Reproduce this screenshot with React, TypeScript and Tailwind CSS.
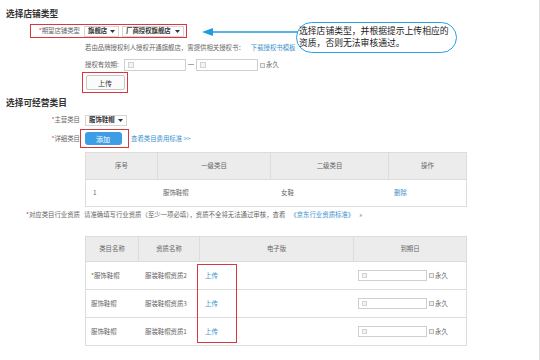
import React from 'react';

const Caret = () => (
  <svg width="5" height="3" viewBox="0 0 5 3" className="shrink-0">
    <polygon points="0,0 5,0 2.5,3" fill="#333" />
  </svg>
);

const Select = ({ label, width }: { label: string; width: string }) => (
  <div className={`${width} h-[11px] border border-[#d5d5d5] flex items-center justify-between px-[3px] font-bold text-[#333] bg-white`}>
    <span>{label}</span>
    <Caret />
  </div>
);

const DateInput = ({ width }: { width: string }) => (
  <div className={`${width} h-[12px] border border-[#cfcfcf] flex items-center pl-[3px] bg-white`}>
    <div className="w-[6px] h-[6px] border border-[#d4d4d4] bg-[#f3f3f3]" />
  </div>
);

const Checkbox = () => <div className="w-[5px] h-[5px] border border-[#bbb] bg-[#f0f0f0]" />;

const Forever = () => (
  <div className="flex items-center gap-[1px] ml-[2px]">
    <Checkbox />
    <span>永久</span>
  </div>
);

const Label = ({ text }: { text: string }) => (
  <div className="w-[74px] text-right shrink-0">
    <span className="text-[#e0333c]">*</span>
    {text}
  </div>
);

const App = () => {
  const quals = ['服装鞋帽资质2', '服装鞋帽资质3', '服装鞋帽资质1'];

  return (
    <div className="relative w-[540px] h-[360px] overflow-hidden bg-white border-r border-[#e2e2e2] text-[6.4px] leading-[8px] text-[#666] font-['Noto_Sans_CJK_SC',sans-serif]">
      <div className="pl-[6px] pt-[9px]">
        {/* 店铺类型 */}
        <h2 className="text-[8.7px] leading-[10px] font-bold text-[#333]">选择店铺类型</h2>
        <div className="mt-[5px] ml-[24px] w-[157px] h-[14px] border-[1.5px] border-[#d9363e] flex items-center">
          <div className="w-[49px] text-right">
            <span className="text-[#e0333c]">*</span>期望店铺类型
          </div>
          <div className="ml-[4px]">
            <Select label="旗舰店" width="w-[35px]" />
          </div>
          <div className="ml-[3px]">
            <Select label="厂商授权旗舰店" width="w-[62px]" />
          </div>
        </div>
        <div className="mt-[6px] ml-[79px] h-[8px] flex">
          <span>若由品牌授权利人授权开通旗舰店，需提供相关授权书：</span>
          <span className="ml-[6px] text-[#3a91cc]">下载授权书模板</span>
        </div>
        <div className="mt-[7px] ml-[79px] h-[12px] flex items-center">
          <span className="w-[39px]">授权有效期:</span>
          <DateInput width="w-[62px]" />
          <span className="w-[10px] text-center">一</span>
          <DateInput width="w-[62px]" />
          <Forever />
        </div>
        <div className="mt-[1px] ml-[76px] w-[46px] h-[21px] border-[1.5px] border-[#d9363e] flex items-center justify-center">
          <div className="w-[39px] h-[15px] border border-[#c8c8c8] rounded-[2px] bg-[#fbfbfb] flex items-center justify-center text-[7px] text-[#333]">
            上传
          </div>
        </div>

        {/* 经营类目 */}
        <h2 className="mt-[5px] text-[8.7px] leading-[10px] font-bold text-[#333]">选择可经营类目</h2>
        <div className="mt-[6px] h-[12px] flex items-center">
          <Label text="主营类目" />
          <div className="ml-[5px]">
            <Select label="服饰鞋帽" width="w-[42px]" />
          </div>
        </div>
        <div className="mt-[3px] h-[19px] flex items-center">
          <Label text="详细类目" />
          <div className="w-[49px] h-[19px] border-[1.5px] border-[#d9363e] flex items-center pl-[3.5px]">
            <div className="w-[37px] h-[13px] rounded-[3px] bg-[#3d9ee5] text-white text-[7px] flex items-center justify-center">
              添加
            </div>
          </div>
          <span className="ml-[2px] text-[#3a91cc]">查看类目费用标准 &gt;&gt;</span>
        </div>

        <div className="mt-[4px] ml-[79px] w-[382px] border border-[#dcdcdc]">
          <div className="flex h-[26px] bg-[#ececec] text-[#666]">
            <div className="w-[72px] flex items-center justify-center border-r border-[#dcdcdc]">序号</div>
            <div className="w-[113px] flex items-center justify-center border-r border-[#dcdcdc]">一级类目</div>
            <div className="w-[118px] flex items-center justify-center border-r border-[#dcdcdc]">二级类目</div>
            <div className="flex-1 flex items-center justify-center">操作</div>
          </div>
          <div className="flex h-[27px] items-center border-t border-[#dcdcdc]">
            <div className="w-[72px] pl-[7px]">1</div>
            <div className="w-[113px] pl-[5px]">服饰鞋帽</div>
            <div className="w-[118px] pl-[10px]">女鞋</div>
            <div className="flex-1 pl-[5px] text-[#3a91cc]">删除</div>
          </div>
        </div>

        {/* 行业资质 */}
        <div className="mt-[4px] h-[8px] flex">
          <Label text="对应类目行业资质" />
          <span className="ml-[4px]">请准确填写行业资质（至少一项必填），资质不全将无法通过审核，查看</span>
          <span className="ml-[5px] text-[#3a91cc]">《京东行业资质标准》</span>
          <span className="ml-[5px]">»</span>
        </div>

        <div className="relative mt-[17px] ml-[79px] w-[382px] border border-[#dcdcdc]">
          <div className="flex h-[24px] bg-[#ececec]">
            <div className="w-[53px] flex items-center justify-center border-r border-[#dcdcdc]">类目名称</div>
            <div className="w-[61px] flex items-center justify-center border-r border-[#dcdcdc]">资质名称</div>
            <div className="w-[154px] flex items-center justify-center border-r border-[#dcdcdc]">电子版</div>
            <div className="flex-1 flex items-center justify-center">到期日</div>
          </div>
          {quals.map((q, i) => (
            <div key={q} className="flex h-[28px] items-center border-t border-[#dcdcdc]">
              <div className="w-[53px] pl-[5px]">{i === 0 ? '*服饰鞋帽' : '服饰鞋帽'}</div>
              <div className="w-[61px] pl-[6px]">{q}</div>
              <div className="w-[154px] pl-[5px] text-[#3a91cc]">上传</div>
              <div className="flex-1 pl-[4px] flex items-center">
                <div className="w-[69px] h-[11px] border border-[#cfcfcf] flex items-center pl-[3px]">
                  <div className="w-[5px] h-[5px] border border-[#d4d4d4] bg-[#f3f3f3]" />
                </div>
                <Forever />
              </div>
            </div>
          ))}
          <div className="absolute left-[111px] top-[27px] w-[40px] h-[79px] border-[1.5px] border-[#d9363e]" />
        </div>
      </div>

      {/* annotation */}
      <svg className="absolute left-[202px] top-[27px]" width="96" height="10" viewBox="0 0 96 10">
        <line x1="10" y1="5" x2="96" y2="5" stroke="#1f9be0" strokeWidth="1.3" />
        <polygon points="0,5 11,1 11,9" fill="#1f9be0" />
      </svg>
      <div className="absolute left-[296px] top-[22px] w-[161px] h-[31px] border-[1.5px] border-[#2aa0e0] rounded-[16px] pl-[2px] pt-[2px] text-[8.8px] leading-[12px] text-[#222] whitespace-nowrap">
        <div>选择店铺类型，并根据提示上传相应的</div>
        <div>资质，否则无法审核通过。</div>
      </div>
    </div>
  );
};

export default App;
